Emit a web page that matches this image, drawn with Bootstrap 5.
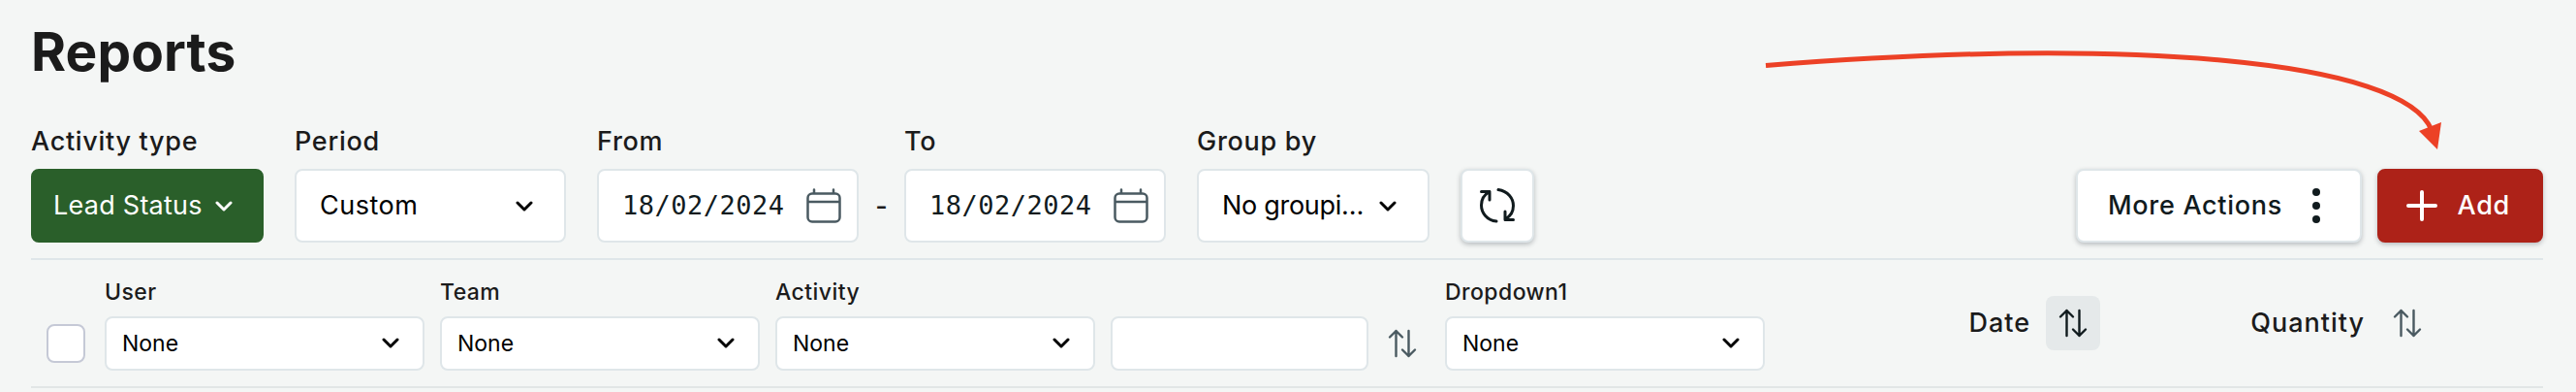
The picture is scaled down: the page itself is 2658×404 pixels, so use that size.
<!DOCTYPE html>
<html lang="en">
<head>
    <meta charset="UTF-8">
    <meta name="viewport" content="width=device-width, initial-scale=1.0">
    <title>Reports</title>
    <link href="https://cdn.jsdelivr.net/npm/bootstrap@5.3.0/dist/css/bootstrap.min.css" rel="stylesheet">
    <style>
        body {
            background: #f4f6f5;
            color: #1b1b1b;
            font-family: Inter, "Liberation Sans", sans-serif;
            font-size: 27px;
            line-height: 32px;
            overflow: hidden;
        }
        svg { flex: none; fill: none; stroke: currentColor; stroke-linecap: round; stroke-linejoin: round; }
        .page { padding: 21px 34px 0 32px; }
        .page-title { font-size: 55px; line-height: 64px; font-weight: 700; margin-bottom: 45px; letter-spacing: .1px; }
        .field-label { display: block; font-weight: 500; margin-bottom: 12px; white-space: nowrap; letter-spacing: .7px; }
        .control {
            height: 76px;
            border: 2px solid #dfe6e9;
            border-radius: 8px;
            background: #fff;
            color: #000;
            font-size: 27px;
            line-height: 32px;
            padding: 0 32px 0 24px;
            white-space: nowrap;
        }
        .control-green { background: #2a5f2a; border-color: #2a5f2a; color: #fff; padding-left: 21px; padding-right: 30px; letter-spacing: .25px; }
        .control-date { width: 270px; padding: 0 16px 0 24px; color: #111b1e; font-family: "DejaVu Sans Mono", monospace; letter-spacing: .5px; }
        .control-date svg { color: #4a5a61; }
        .raised { box-shadow: 0 2px 5px rgba(30, 40, 50, .28); color: #111b1e; font-weight: 500; letter-spacing: .7px; }
        .control-red { background: #ad2218; border-color: #ad2218; color: #fff; }
        .toolbar { gap: 32px; padding-bottom: 16px; border-bottom: 2px solid #dfe6e9; }
        .dash { width: 47px; line-height: 74px; text-align: center; font-weight: 500; }

        .filters { padding: 18px 0 16px 16px; gap: 16px; border-bottom: 2px solid #e2e6e6; font-size: 23px; }
        .filters .field-label { line-height: 28px; margin-bottom: 11px; padding-top: 1px; letter-spacing: .45px; }
        .filters .control { width: 330px; height: 56px; font-size: 23px; padding: 0 24px 1px 16px; }
        .filters .control-search { width: 266px; }
        .checkbox { width: 40px; height: 40px; border: 2px solid #c5c9d6; border-radius: 8px; background: #fff; margin: 0 4px 8px 0; }
        .sort { width: 56px; height: 56px; border: 0; border-radius: 8px; background: none; color: #4a5a61; padding: 0; }
        .sort.on { background: #e5e9ea; color: #111b1e; }
        .sort-search { width: 50px; }
        .after-search { margin-left: 13px; }
        .col-sort { font-size: 27px; font-weight: 500; gap: 16px; padding-bottom: 2px; letter-spacing: 1px; }
        .pointer { position: absolute; left: 0; top: 0; pointer-events: none; }
    </style>
</head>
<body>
    <!-- Shared icons -->
    <svg class="d-none">
        <symbol id="chevron" viewBox="0 0 18 11"><path d="M2 2l7 7 7-7" stroke-width="3"/></symbol>
        <symbol id="calendar" viewBox="0 0 36 36"><path d="M6 5.500h24a4.500 4.500 0 0 1 4.500 4.500v20a4.500 4.500 0 0 1-4.500 4.500H6A4.500 4.500 0 0 1 1.500 30V10A4.500 4.500 0 0 1 6 5.500zM1.500 14h33M8 1.500v4M28 1.500v4" stroke-width="2.500"/></symbol>
        <symbol id="sort" viewBox="0 0 30 30"><path d="M8.500 28V2M2 8.500L8.500 2 15 8.500M21.500 2v26M15 21.500l6.500 6.500 6.500-6.500" stroke-width="2.400"/></symbol>
    </svg>

    <div class="page">
        <h1 class="page-title">Reports</h1>

        <!-- Toolbar -->
        <div class="toolbar d-flex align-items-end">
            <div>
                <label class="field-label">Activity type</label>
                <button class="control control-green d-flex align-items-center justify-content-between" style="width:240px">
                    <span>Lead Status</span><svg width="18" height="11"><use href="#chevron"/></svg>
                </button>
            </div>
            <div>
                <label class="field-label">Period</label>
                <button class="control d-flex align-items-center justify-content-between" style="width:280px;letter-spacing:.5px">
                    <span>Custom</span><svg width="18" height="11"><use href="#chevron"/></svg>
                </button>
            </div>
            <div class="d-flex align-items-end">
                <div>
                    <label class="field-label">From</label>
                    <div class="control control-date d-flex align-items-center justify-content-between">
                        <span>18/02/2024</span><svg width="36" height="36"><use href="#calendar"/></svg>
                    </div>
                </div>
                <span class="dash">-</span>
                <div>
                    <label class="field-label">To</label>
                    <div class="control control-date d-flex align-items-center justify-content-between">
                        <span>18/02/2024</span><svg width="36" height="36"><use href="#calendar"/></svg>
                    </div>
                </div>
            </div>
            <div>
                <label class="field-label">Group by</label>
                <button class="control d-flex align-items-center justify-content-between" style="width:240px;letter-spacing:-.3px">
                    <span>No groupi…</span><svg width="18" height="11"><use href="#chevron"/></svg>
                </button>
            </div>
            <button class="control raised d-flex align-items-center justify-content-center px-0" style="width:76px">
                <svg width="36" height="36" viewBox="0 0 36 36" stroke-width="3">
                    <path d="M17 34C7 33 1.500 25 1.500 17.500 1.500 12 4.500 6.500 10 3.500M1.500 3.500H10V12"/>
                    <path d="M19 1.500C29 3 34.500 10.500 34.500 18c0 6-3 11-8.500 14M34.500 32.500H26V24"/>
                </svg>
            </button>
            <div class="d-flex gap-3 ms-auto">
                <button class="control raised d-flex align-items-center justify-content-between" style="width:295px;padding-left:31px;padding-right:41px">
                    <span>More Actions</span>
                    <svg width="8" height="36"><g fill="currentColor" stroke="none"><circle cx="4" cy="4" r="4"/><circle cx="4" cy="18" r="4"/><circle cx="4" cy="32" r="4"/></g></svg>
                </button>
                <button class="control raised control-red d-flex align-items-center justify-content-between" style="width:171px;padding-left:28px">
                    <svg width="32" height="32"><path d="M16 2v28M2 16h28" stroke-width="4"/></svg>
                    <span>Add</span>
                </button>
            </div>
        </div>

        <!-- Column filters -->
        <div class="filters d-flex align-items-end">
            <div class="checkbox"></div>
            <div>
                <label class="field-label">User</label>
                <button class="control d-flex align-items-center justify-content-between"><span>None</span><svg width="18" height="11"><use href="#chevron"/></svg></button>
            </div>
            <div>
                <label class="field-label">Team</label>
                <button class="control d-flex align-items-center justify-content-between"><span>None</span><svg width="18" height="11"><use href="#chevron"/></svg></button>
            </div>
            <div>
                <label class="field-label">Activity</label>
                <button class="control d-flex align-items-center justify-content-between"><span>None</span><svg width="18" height="11"><use href="#chevron"/></svg></button>
            </div>
            <div class="d-flex">
                <div class="control control-search"></div>
                <button class="sort sort-search d-flex align-items-center justify-content-end"><svg width="30" height="30"><use href="#sort"/></svg></button>
            </div>
            <div class="after-search">
                <label class="field-label">Dropdown1</label>
                <button class="control d-flex align-items-center justify-content-between"><span>None</span><svg width="18" height="11"><use href="#chevron"/></svg></button>
            </div>
            <div class="d-flex align-self-stretch ms-auto" style="gap:155px;padding-right:112px">
                <div class="col-sort d-flex align-items-center">
                    <span>Date</span>
                    <button class="sort on d-flex align-items-center justify-content-center"><svg width="30" height="30"><use href="#sort"/></svg></button>
                </div>
                <div class="col-sort d-flex align-items-center">
                    <span>Quantity</span>
                    <button class="sort d-flex align-items-center justify-content-center"><svg width="30" height="30"><use href="#sort"/></svg></button>
                </div>
            </div>
        </div>
    </div>

    <!-- Arrow pointing at the Add button -->
    <svg class="pointer" width="2658" height="170" style="color:#ec4126">
        <path d="M1822 67.500C2200 37.500 2480 62 2509 134" stroke-width="5" stroke-linecap="butt"/>
        <path d="M2515 154L2496 135l23-9z" fill="currentColor" stroke="none"/>
    </svg>

    <script src="https://cdn.jsdelivr.net/npm/bootstrap@5.3.0/dist/js/bootstrap.bundle.min.js"></script>
</body>
</html>
